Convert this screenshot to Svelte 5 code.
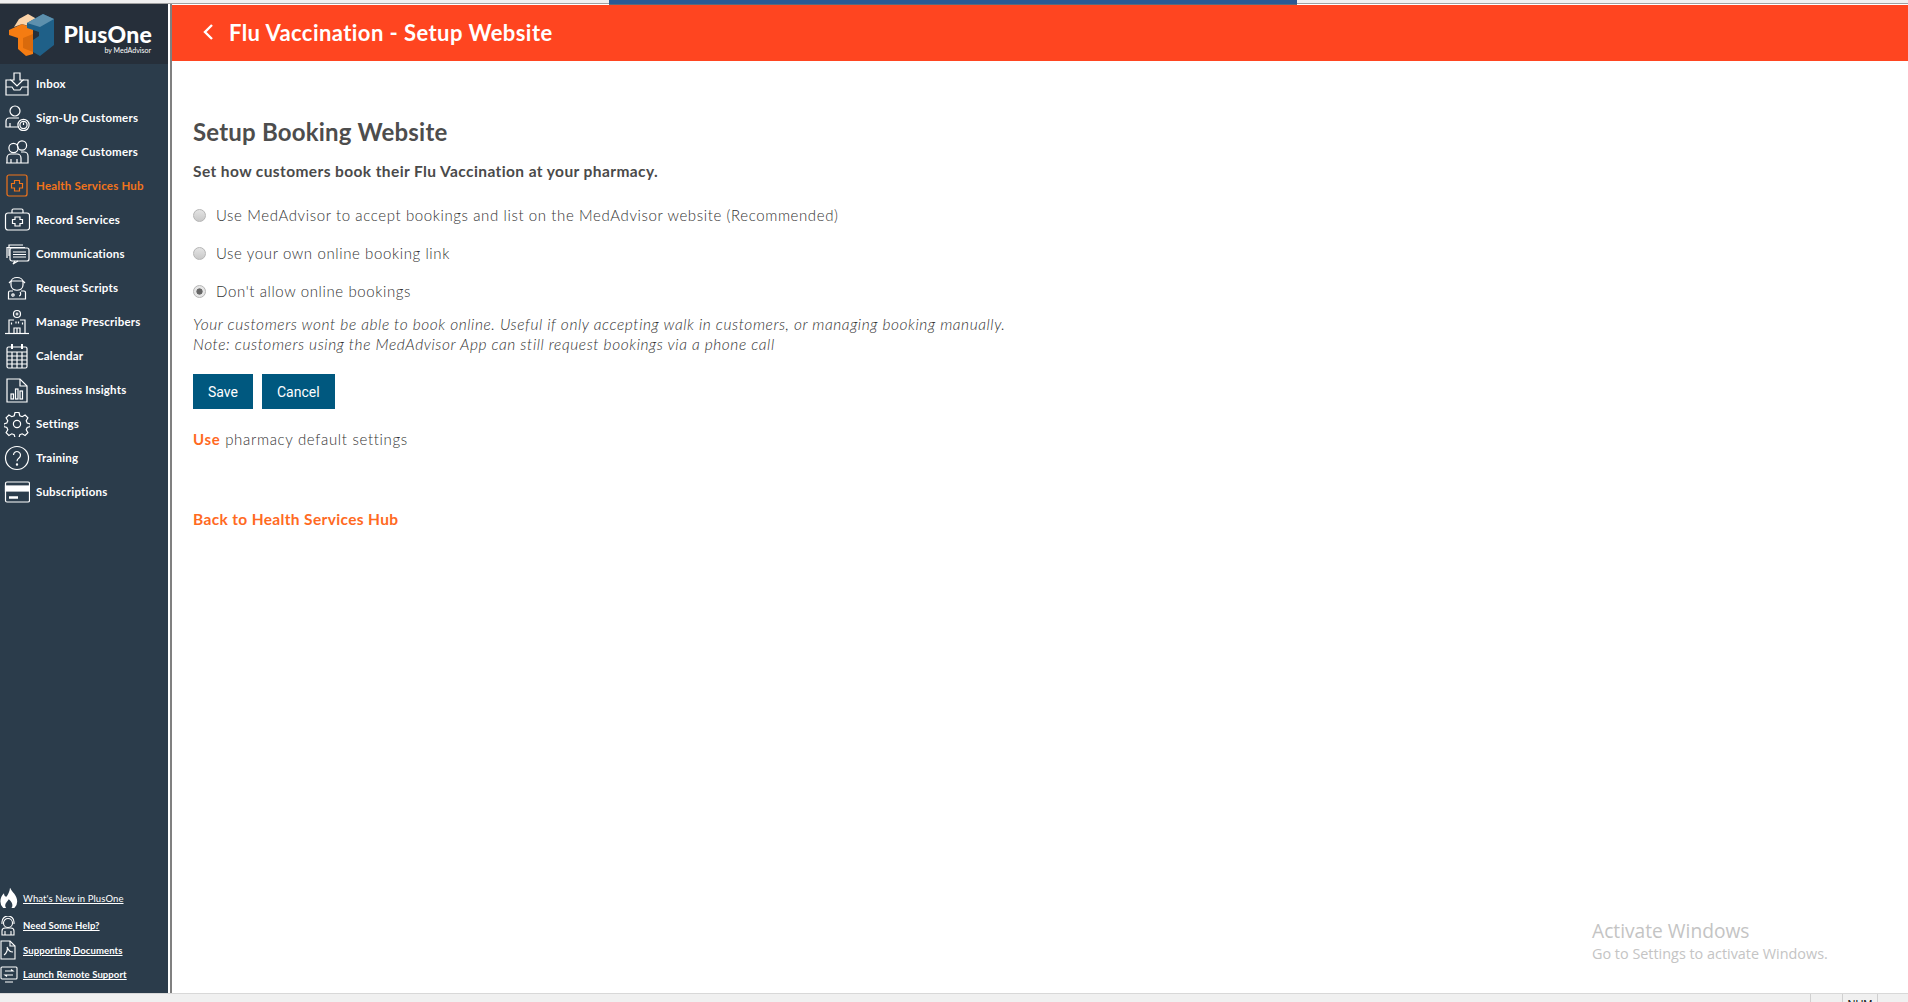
<script>
  const icons = {
    inbox: '<path d="M7 9H2v15h22V9h-5"/><path d="M2 16h6l2 3h6l2-3h6"/><path d="M10 2h6v7h3l-6 6-6-6h3z"/>',
    signup: '<circle cx="11" cy="6" r="5"/><path d="M15 13H5a3 3 0 0 0-3 3v6h13"/><path d="M6 22v-4"/><circle cx="19.5" cy="20" r="5.6"/><circle cx="19.5" cy="20" r="3.6"/><path d="M19.5 17.5V20"/>',
    manage: '<circle cx="9.5" cy="9" r="4.6"/><circle cx="18" cy="6.5" r="4.6"/><path d="M3 24v-5a4 4 0 0 1 4-4h6a4 4 0 0 1 4 4v5zM2 24h22v-7a4 4 0 0 0-4-4h-3"/><path d="M7 24v-4M13 24v-4"/>',
    hub: '<rect x="3" y="2" width="20" height="21" rx="2"/><path d="M10.5 7.5h5v3h3v4.500h-3v3h-5v-3h-3v-4.500h3z"/>',
    record: '<rect x="1.500" y="6" width="24" height="17" rx="2.500"/><path d="M8 6V3.500A1.500 1.500 0 0 1 9.500 2h8A1.500 1.500 0 0 1 19 3.500V6"/><path d="M11 10h5v2.500h2.500v4H16V19h-5v-2.500H8.500v-4H11z"/>',
    comms: '<path d="M5 15V4h14"/><path d="M3 17V6.500h18"/><rect x="6" y="7" width="19" height="13" rx="2"/><path d="M9 11h13M9 13.500h13M9 16h13M11 20l-2 3 5-3"/>',
    scripts: '<path d="M7 7c0-6 12-6 12 0v3c0 7-12 7-12 0z"/><path d="M7 6h12M5 8l2-2M21 8l-2-2"/><path d="M9 16H6a1.500 1.500 0 0 0-1.500 1.500V24h17v-6.500A1.500 1.500 0 0 0 20 16h-3"/><circle cx="9" cy="20" r="1.200"/><path d="M15 21c2 0 2-3 1-4"/>',
    prescribers: '<circle cx="13" cy="5" r="3.500"/><path d="M11.500 5h3M13 3.500v3"/><path d="M5 24V11h5M21 24V11h-5"/><path d="M1 24.500h24"/><path d="M10 24v-5h6v5"/><path d="M7.500 13.500v2M12 12.500v2M14.500 12.500v2M18.500 13.500v2M13 19v5"/>',
    calendar: '<rect x="3" y="4" width="20" height="21" rx="1.500"/><path d="M3 9h20M3 13h20M3 17h20M3 21h20M8 9v16M13 9v16M18 9v16"/><path d="M8 1v5M18 1v5" stroke-width="2"/>',
    insights: '<path d="M3 2h13l7 7v16H3z"/><path d="M16 2v7h7"/><rect x="7" y="17" width="2.500" height="5"/><rect x="11.500" y="12" width="2.500" height="10"/><rect x="16" y="14" width="2.500" height="8"/>',
    settings: '<circle cx="13" cy="13" r="3.600"/><path d="M11 1.500h4l.8 3.200 2.400 1 2.900-1.700 2.800 2.800-1.700 2.900 1 2.400 3.100.8v2.700l-3.100.8-1 2.400 1.700 2.900-2.800 2.800-2.900-1.700-2.400 1-.8 2.900h-4l-.8-2.900-2.400-1-2.900 1.700-2.800-2.800 1.700-2.900-1-2.400-3.100-.8v-2.700l3.100-.8 1-2.400-1.700-2.900 2.800-2.800 2.900 1.700 2.400-1z"/>',
    training: '<circle cx="13" cy="13" r="11.500"/><path d="M9.500 10a3.500 3.500 0 1 1 5.500 2.900c-1.300.9-2 1.600-2 3.300"/><circle cx="13" cy="19.500" r=".6"/>',
    subs: '<rect x="1.500" y="3" width="24" height="20" rx="1.500"/><rect x="1.500" y="7" width="24" height="5" fill="#fff"/><path d="M5 18.500h9" stroke-width="2.500"/>',
  }

  const nav = [
    { icon: 'inbox', label: 'Inbox' },
    { icon: 'signup', label: 'Sign-Up Customers' },
    { icon: 'manage', label: 'Manage Customers' },
    { icon: 'hub', label: 'Health Services Hub', active: true },
    { icon: 'record', label: 'Record Services' },
    { icon: 'comms', label: 'Communications' },
    { icon: 'scripts', label: 'Request Scripts' },
    { icon: 'prescribers', label: 'Manage Prescribers' },
    { icon: 'calendar', label: 'Calendar' },
    { icon: 'insights', label: 'Business Insights' },
    { icon: 'settings', label: 'Settings' },
    { icon: 'training', label: 'Training' },
    { icon: 'subs', label: 'Subscriptions' },
  ]

  const footer = [
    { label: "What's New in PlusOne", cls: 'light', icon: '<g transform="translate(-2 -2) scale(1.200)"><path d="M10 1c1 4 6 6 6 12a7 7 0 0 1-14 0c0-3 1-5 3-7 0 2 1 3 2 3 1.500-2 3-5 3-8z" fill="#fff" stroke="none"/><path d="M9 11c2 2 3 3 3 5a3 3 0 0 1-6 0c0-2 2-3 3-5z" fill="#2b3c4b" stroke="none"/></g>' },
    { label: 'Need Some Help?', icon: '<circle cx="8" cy="7" r="4.500"/><path d="M2 8V6a6 6 0 0 1 12 0v2M2 19v-4a3 3 0 0 1 3-3h6a3 3 0 0 1 3 3v4zM5 19v-4M11 19v-4"/>' },
    { label: 'Supporting Documents', icon: '<path d="M1 1h9l5 5v13H1z"/><path d="M10 1v5h5M4 15c3-2 4-6 3-8 2 4 3 5 6 5"/>' },
    { label: 'Launch Remote Support', icon: '<rect x="1" y="2" width="16" height="12" rx="1"/><path d="M5 6h8l-2-1.500M13 10H5l2 1.500M5 17h8"/>' },
  ]

  let booking = $state('none')
</script>

<div class="page">
  <div class="chrome"><div class="tab"></div></div>

  <div class="body">
    <aside class="sidebar">
      <div class="brand">
        <svg class="cube" width="46" height="44" viewBox="0 0 46 44">
          <path d="M0 16 L13 10 L24 14 L24 40 L17 42 L9 35 L9 24 L0 21z" fill="#f57c12"/>
          <path d="M10 5 L19 0 L26 4 L26 14 L13 10 L5 13z" fill="#fbd3a8"/>
          <path d="M18 9 L34 0 L45 5 L45 31 L31 42 L24 38 L24 26 L30 22 L30 18 L18 14z" fill="#1f6088"/>
          <path d="M34 0 L45 5 L31 13 L18 9z" fill="#5d90ad"/>
          <path d="M14 24 L24 20 L24 38 L14 34z" fill="#d96a0c"/>
        </svg>
        <div class="wordmark">
          <span class="plus">PlusOne</span>
          <span class="by">by MedAdvisor</span>
        </div>
      </div>

      <nav>
        {#each nav as item}
          <a href="#top" class="nav-item" class:active={item.active}>
            <svg width="26" height="26" viewBox="0 0 26 26">{@html icons[item.icon]}</svg>
            <span>{item.label}</span>
          </a>
        {/each}
      </nav>

      <div class="side-footer">
        {#each footer as f}
          <a href="#top" class="foot-item {f.cls ?? ''}">
            <svg width="18" height="20" viewBox="0 0 18 20">{@html f.icon}</svg>
            <span>{f.label}</span>
          </a>
        {/each}
      </div>
    </aside>

    <main>
      <header class="topbar">
        <svg width="14" height="20" viewBox="0 0 14 20"><path d="M11 3 L4 10 L11 17" /></svg>
        <h1>Flu Vaccination - Setup Website</h1>
      </header>

      <section class="content">
        <h2>Setup Booking Website</h2>
        <p class="lead">Set how customers book their Flu Vaccination at your pharmacy.</p>

        <div class="options">
          <label class="radio"><input type="radio" bind:group={booking} value="med" /><span>Use MedAdvisor to accept bookings and list on the MedAdvisor website (Recommended)</span></label>
          <label class="radio"><input type="radio" bind:group={booking} value="own" /><span>Use your own online booking link</span></label>
          <label class="radio"><input type="radio" bind:group={booking} value="none" /><span>Don't allow online bookings</span></label>
        </div>

        <p class="note">
          Your customers wont be able to book online. Useful if only accepting walk in customers, or managing booking manually.<br />
          Note: customers using the MedAdvisor App can still request bookings via a phone call
        </p>

        <div class="actions">
          <button>Save</button>
          <button>Cancel</button>
        </div>

        <p class="defaults"><a href="#top">Use</a> pharmacy default settings</p>
        <a href="#top" class="back">Back to Health Services Hub</a>
      </section>

      <div class="watermark">
        <div class="wm-title">Activate Windows</div>
        <div class="wm-sub">Go to Settings to activate Windows.</div>
      </div>
    </main>
  </div>

  <div class="status"><span class="cell first"></span><span class="cell num">NUM</span><span class="cell last"></span></div>
</div>

<style>
  :global(body) {
    margin: 0;
    background: #fff;
  }

  .page {
    width: 1908px;
    height: 1002px;
    display: flex;
    flex-direction: column;
    overflow: hidden;
    font-family: Lato, sans-serif;
  }

  .chrome {
    height: 4px;
    flex: none;
    background: #f0f0f0;
    border-bottom: 1px solid #a0a0a0;
    box-sizing: border-box;
    position: relative;
  }

  .tab {
    position: absolute;
    left: 609px;
    width: 688px;
    top: 0;
    height: 5px;
    background: #2a5a94;
    border-bottom: 1px solid #5a6a7a;
    box-sizing: border-box;
    z-index: 2;
  }

  .body {
    flex: 1;
    display: flex;
    min-height: 0;
  }

  .sidebar {
    width: 168px;
    flex: none;
    background: #2b3c4b;
    display: flex;
    flex-direction: column;
    color: #fff;
  }

  .brand {
    height: 60px;
    flex: none;
    background: #262f3a;
    display: flex;
    align-items: center;
    padding-left: 9px;
    gap: 7px;
    box-sizing: border-box;
  }

  .cube {
    margin-top: 4px;
  }

  .wordmark {
    display: flex;
    flex-direction: column;
    align-items: flex-end;
    width: 90px;
    margin-top: 8px;
  }

  .plus {
    font-size: 23px;
    font-weight: 900;
    line-height: 24px;
    letter-spacing: 0.2px;
  }

  .by {
    font-size: 7px;
    line-height: 8px;
    margin-right: 1px;
  }

  nav {
    padding-top: 3px;
    display: flex;
    flex-direction: column;
  }

  .nav-item {
    height: 34px;
    display: flex;
    align-items: center;
    padding-left: 4px;
    gap: 6px;
    color: #fff;
    text-decoration: none;
    font-size: 11.500px;
    font-weight: 700;
    letter-spacing: 0.2px;
  }

  .nav-item span {
    padding-bottom: 2px;
  }

  .nav-item svg {
    flex: none;
    fill: none;
    stroke: #fff;
    stroke-width: 1.200;
  }

  .nav-item.active {
    color: #f2741b;
  }

  .nav-item.active svg {
    stroke: #f2741b;
  }

  .side-footer {
    margin-top: auto;
    padding-bottom: 6px;
    display: flex;
    flex-direction: column;
  }

  .foot-item {
    height: 24.500px;
    display: flex;
    align-items: center;
    gap: 5px;
    color: #fff;
    font-size: 9.500px;
    font-weight: 700;
    letter-spacing: 0.1px;
    text-decoration: underline;
  }

  .foot-item.light {
    font-weight: 400;
    padding-bottom: 3px;
  }

  .foot-item svg {
    flex: none;
    fill: none;
    stroke: #fff;
    stroke-width: 1.100;
  }

  main {
    flex: 1;
    position: relative;
    min-width: 0;
    border-left: 2px solid #808080;
    margin-left: 2px;
  }

  .topbar {
    height: 56px;
    background: #ff4520;
    display: flex;
    align-items: center;
    padding-left: 29px;
    padding-bottom: 2px;
    box-sizing: border-box;
    gap: 14px;
    margin-top: 1px;
  }

  .topbar svg {
    fill: none;
    stroke: #fff;
    stroke-width: 2.400;
  }

  h1 {
    margin: 0;
    color: #fff;
    font-size: 22px;
    font-weight: 700;
    letter-spacing: 0.43px;
  }

  .content {
    padding: 57px 0 0 21px;
    color: #4a4a4a;
  }

  h2 {
    margin: 0;
    font-size: 24px;
    line-height: 28px;
    font-weight: 700;
    letter-spacing: 0.2px;
    color: #4d4d4d;
  }

  .lead {
    margin: 15px 0 0;
    font-size: 15.500px;
    line-height: 20px;
    font-weight: 700;
    letter-spacing: 0.4px;
  }

  .options {
    margin-top: 24px;
    display: flex;
    flex-direction: column;
    gap: 18px;
  }

  .radio {
    display: flex;
    align-items: center;
    height: 20px;
    font-size: 15px;
    font-weight: 300;
    color: #333;
    letter-spacing: 0.61px;
  }

  .radio input {
    appearance: none;
    margin: 0 10px 0 0;
    width: 13px;
    height: 13px;
    border-radius: 50%;
    border: 1px solid #b5b5b5;
    background: linear-gradient(#e4e4e4, #c8c8c8);
    box-sizing: border-box;
  }

  .radio input:checked {
    background: radial-gradient(circle, #666 0 2.800px, #e6e6e6 3.400px);
  }

  .note {
    margin: 13px 0 0;
    font-size: 15.500px;
    line-height: 20px;
    font-style: italic;
    font-weight: 300;
    letter-spacing: 0.57px;
    color: #333;
  }

  .actions {
    margin-top: 20px;
    display: flex;
    gap: 9px;
  }

  button {
    height: 35px;
    padding: 0 15px;
    border: none;
    background: #00587f;
    color: #fff;
    font-family: Roboto, sans-serif;
    font-size: 14px;
    font-weight: 400;
  }

  .defaults {
    margin: 20px 0 0;
    font-size: 15px;
    font-weight: 300;
    line-height: 20px;
    color: #333;
    letter-spacing: 0.67px;
  }

  .defaults a {
    color: #ff6a1f;
    font-weight: 700;
    text-decoration: none;
  }

  .back {
    display: block;
    margin-top: 60px;
    color: #ff6a1f;
    font-size: 15.500px;
    line-height: 20px;
    font-weight: 700;
    letter-spacing: 0.35px;
    text-decoration: none;
  }

  .watermark {
    position: absolute;
    left: 1420px;
    top: 914px;
    color: #c4c4c4;
    font-family: 'Open Sans', sans-serif;
  }

  .wm-title {
    font-size: 19.200px;
    line-height: 26px;
  }

  .wm-sub {
    font-size: 14.400px;
    line-height: 20px;
  }

  .status {
    height: 9px;
    flex: none;
    background: #f0f0f0;
    border-top: 1px solid #d8d8d8;
    box-sizing: border-box;
    display: flex;
    justify-content: flex-end;
    overflow: hidden;
  }

  .cell {
    border-left: 1px solid #d0d0d0;
    box-sizing: border-box;
    font: 11px 'Liberation Sans', sans-serif;
    color: #111;
    text-align: center;
    padding-top: 4px;
  }

  .first {
    width: 32px;
  }

  .num {
    width: 35px;
  }

  .last {
    width: 31px;
  }
</style>
